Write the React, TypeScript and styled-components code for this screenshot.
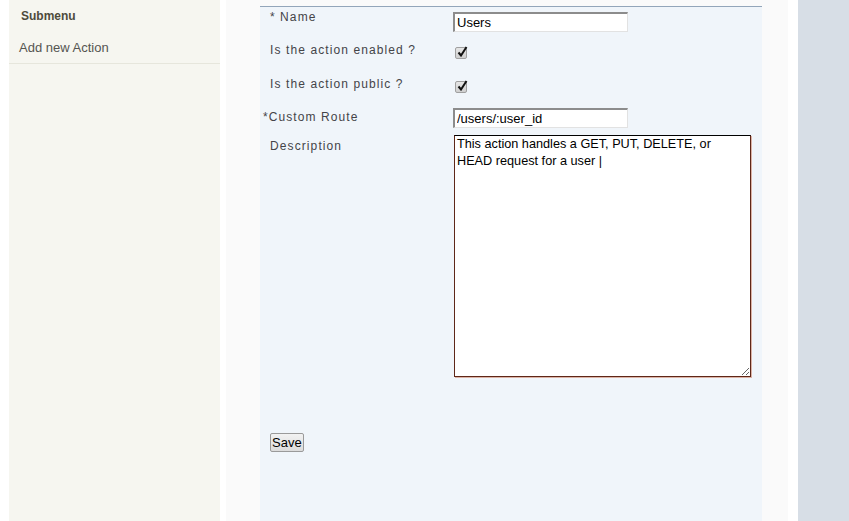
import React from "react";
import styled, { createGlobalStyle } from "styled-components";

const GlobalStyle = createGlobalStyle`
  html, body {
    margin: 0;
    padding: 0;
    background: #ffffff;
  }
  body {
    font-family: "Liberation Sans", Arial, sans-serif;
  }
`;

const Page = styled.div`
  display: flex;
  height: 521px;
  padding-left: 9px;
  overflow: hidden;
  background: #ffffff;
`;

const Sidebar = styled.div`
  width: 211px;
  background: #f6f6f0;
  flex-shrink: 0;
`;

const SideTitle = styled.div`
  font-size: 12px;
  font-weight: bold;
  color: #4d4b3c;
  padding: 9px 0 0 12px;
  line-height: 15px;
`;

const SideLink = styled.a`
  display: block;
  font-size: 13px;
  color: #555550;
  text-decoration: none;
  padding: 16px 0 0 10px;
  line-height: 15px;
  height: 40px;
  box-sizing: border-box;
  border-bottom: 1px solid #e6e6dc;
`;

const Main = styled.div`
  margin-left: 6px;
  width: 562px;
  background: #fafafa;
  padding: 0 26px 0 34px;
  box-sizing: border-box;
  flex-shrink: 0;
`;

const FormPanel = styled.form`
  margin-top: 6px;
  height: 515px;
  border-top: 1px solid #93a6ba;
  background: #f0f5fa;
  padding-left: 10px;
  box-sizing: border-box;
`;

const Row = styled.div<{ $h: number }>`
  display: grid;
  grid-template-columns: 183px 1fr;
  align-items: start;
  height: ${(p) => p.$h}px;
`;

const Label = styled.label<{ $top: number; $hang?: boolean }>`
  display: block;
  margin-top: ${(p) => p.$top}px;
  margin-left: ${(p) => (p.$hang ? -7 : 0)}px;
  font-size: 12px;
  line-height: 14px;
  letter-spacing: 1.1px;
  color: #444448;
`;

const Star = styled.span`
  letter-spacing: 0;
  margin-right: 1px;
`;

const Field = styled.div<{ $top: number }>`
  margin-top: ${(p) => p.$top}px;
`;

const TextInput = styled.input`
  display: block;
  width: 175px;
  height: 20px;
  box-sizing: border-box;
  margin: 0;
  padding: 0 2px;
  font-family: "Liberation Sans", Arial, sans-serif;
  font-size: 13px;
  color: #000;
  background: #fff;
  border-style: solid;
  border-width: 2px 1px 1px 2px;
  border-color: #8c8c8c #e2e2e2 #e2e2e2 #8c8c8c;
  outline: none;
`;

const Box = styled.span`
  position: relative;
  display: block;
  width: 12px;
  height: 12px;
  margin-left: 2px;
  box-sizing: border-box;
  border: 1px solid #a0a0a0;
  border-radius: 2px;
  background: linear-gradient(#e6e6e6, #cfcfcf);
`;

const Tick = styled.svg`
  position: absolute;
  left: 1px;
  top: -2px;
`;

const HiddenInput = styled.input`
  display: none;
`;

const TextArea = styled.textarea`
  display: block;
  width: 297px;
  height: 242px;
  box-sizing: border-box;
  margin: 0 0 0 1px;
  padding: 0 2px;
  font-family: "Liberation Sans", Arial, sans-serif;
  font-size: 12.7px;
  line-height: 17px;
  color: #000;
  background: #fff;
  border: 1px solid #5e2718;
  border-top-color: #000;
  box-shadow: 1px 1px 0 #dcb3a6;
  outline: none;
`;

const SaveRow = styled.div`
  padding-top: 56px;
`;

const SaveButton = styled.button`
  display: block;
  height: 19px;
  padding: 0 1px;
  font-family: "Liberation Sans", Arial, sans-serif;
  font-size: 13px;
  line-height: 17px;
  color: #000;
  background: linear-gradient(#f2f2f2, #dcdcdc);
  border: 1px solid #9a9a9a;
  border-radius: 2px;
`;

const Gutter = styled.div`
  width: 10px;
  flex-shrink: 0;
`;

const RightPanel = styled.div`
  flex: 1;
  background: #d7dee6;
`;

function Check() {
  return (
    <label>
      <HiddenInput type="checkbox" defaultChecked />
      <Box>
        <Tick width="11" height="11" viewBox="0 0 11 11">
          <path d="M1.5 6.5 L4 9.5 L9.5 1" fill="none" stroke="#111" strokeWidth="2" />
        </Tick>
      </Box>
    </label>
  );
}

export default function App() {
  return (
    <>
      <GlobalStyle />
      <Page>
        <Sidebar>
          <SideTitle>Submenu</SideTitle>
          <SideLink href="#">Add new Action</SideLink>
        </Sidebar>
        <Main>
          <FormPanel onSubmit={(e) => e.preventDefault()}>
            <Row $h={32}>
              <Label $top={3}>
                <Star>*</Star> Name
              </Label>
              <Field $top={5}>
                <TextInput defaultValue="Users" />
              </Field>
            </Row>
            <Row $h={33}>
              <Label $top={4}>Is the action enabled ?</Label>
              <Field $top={8}>
                <Check />
              </Field>
            </Row>
            <Row $h={33}>
              <Label $top={5}>Is the action public ?</Label>
              <Field $top={9}>
                <Check />
              </Field>
            </Row>
            <Row $h={28}>
              <Label $top={5} $hang>
                <Star>*</Star>Custom Route
              </Label>
              <Field $top={3}>
                <TextInput defaultValue="/users/:user_id" />
              </Field>
            </Row>
            <Row $h={244}>
              <Label $top={6}>Description</Label>
              <Field $top={2}>
                <TextArea defaultValue="This action handles a GET, PUT, DELETE, or HEAD request for a user |" />
              </Field>
            </Row>
            <SaveRow>
              <SaveButton type="submit">Save</SaveButton>
            </SaveRow>
          </FormPanel>
        </Main>
        <Gutter />
        <RightPanel />
      </Page>
    </>
  );
}
